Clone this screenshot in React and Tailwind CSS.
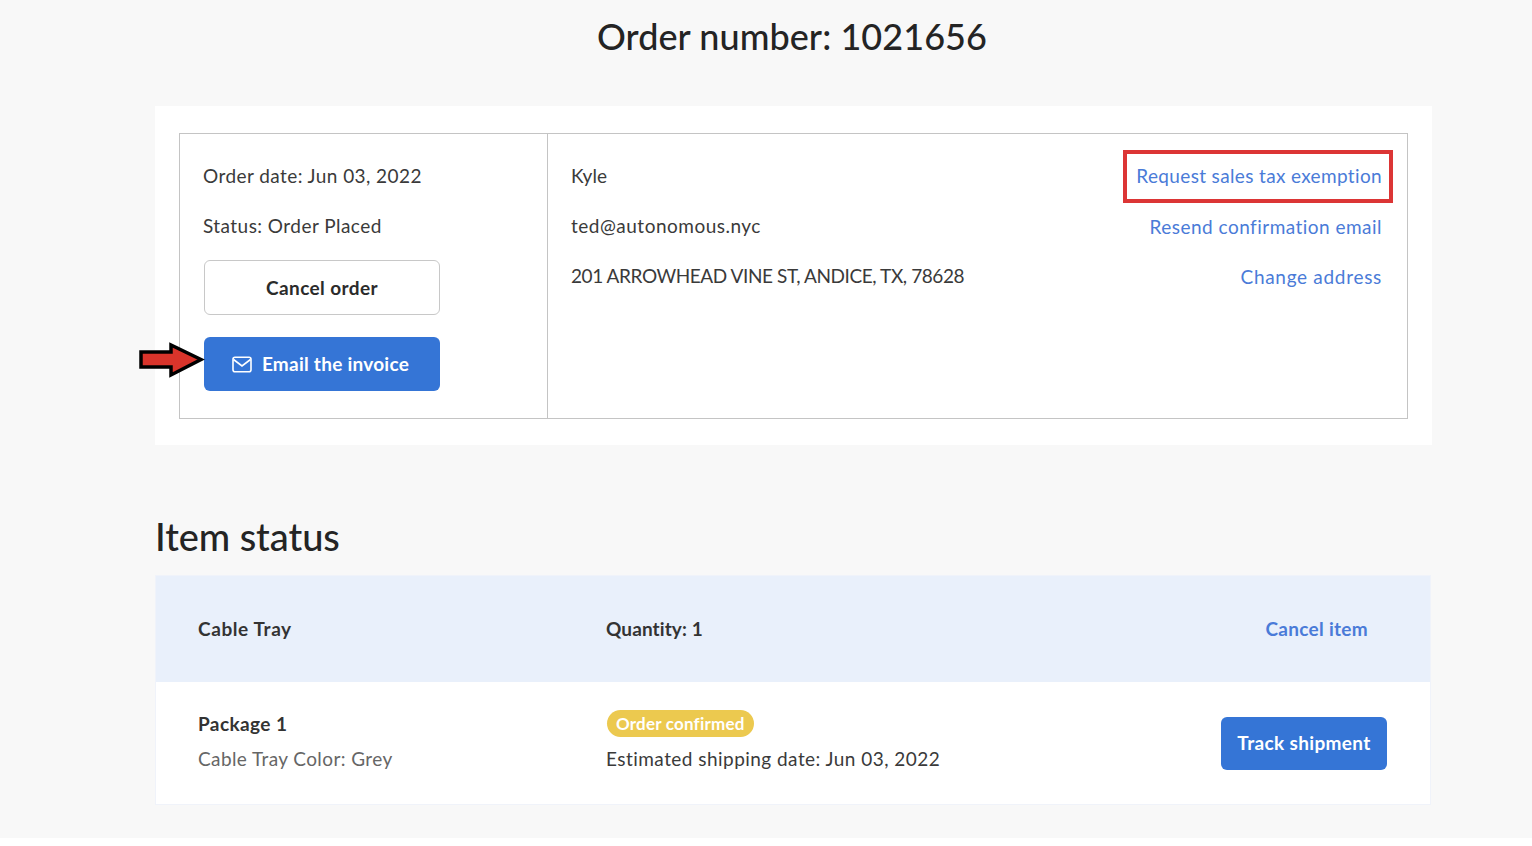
export default function App() {
  const font = { fontFamily: '"Lato", "Noto Sans", sans-serif' };
  return (
    <div style={font} className="w-[1532px] h-[846px] bg-white overflow-hidden text-[#2b2b2b]">
      <div className="h-[838px] bg-[#f8f8f8] pl-[155px] pr-[100px]">
        <div className="h-[106px] w-[1277px] pt-[14px] text-center">
          <h1 className="text-[36px] leading-[44px] font-medium text-[#242424] pr-[3px] tracking-[0.06px]">Order number: 1021656</h1>
        </div>

        <div className="w-[1277px] h-[339px] bg-white pt-[27px] pl-[24px]">
          <div className="w-[1229px] h-[286px] border border-[#c4c4c4] flex text-[19px] leading-[24px] text-[#3a3a3a]">
            <div className="w-[368px] shrink-0 border-r border-[#c4c4c4] pl-[23px] pt-[30px] flex flex-col items-start">
              <p className="tracking-[0.43px]">Order date: Jun 03, 2022</p>
              <p className="mt-[26px] tracking-[0.45px]">Status: Order Placed</p>
              <button className="mt-[22px] ml-[1px] w-[236px] h-[55px] rounded-[6px] border border-[#c8c8c8] bg-white text-[19px] font-bold text-[#2b2b2b] tracking-[0.4px]">Cancel order</button>
              <div className="relative mt-[22px] ml-[1px]">
                <button className="w-[236px] h-[54px] rounded-[6px] bg-[#3575d6] text-white text-[19px] font-bold flex items-center justify-center gap-[10px] pr-[3px] tracking-[0.25px]">
                  <svg width="20" height="17" viewBox="0 0 20 17" fill="none" stroke="white" strokeWidth="1.6">
                    <rect x="1" y="1.2" width="18" height="14.6" rx="2" />
                    <path d="M1.5 3.5L10 10l8.5-6.5" />
                  </svg>
                  Email the invoice
                </button>
                <svg className="absolute left-[-66px] top-[3px]" width="68" height="38" viewBox="0 0 68 38">
                  <path d="M3 12H33V5L63 19.5 33 35V27H3Z" fill="#d9342b" stroke="#000" strokeWidth="3.5" strokeLinejoin="miter" />
                </svg>
              </div>
            </div>

            <div className="flex-1 flex justify-between pl-[23px] pr-[25px] pt-[30px]">
              <div className="flex flex-col gap-[26px]">
                <p>Kyle</p>
                <p className="tracking-[0.5px]">ted@autonomous.nyc</p>
                <p className="tracking-[-0.42px]">201 ARROWHEAD VINE ST, ANDICE, TX, 78628</p>
              </div>
              <div className="flex flex-col items-end text-[#4a7bd8]">
                <div className="relative">
                  <p className="tracking-[0.35px]">Request sales tax exemption</p>
                  <div className="absolute left-[-13px] right-[-11px] top-[-14px] bottom-[-15px] border-[4px] border-[#dc3535]"></div>
                </div>
                <p className="mt-[27px] tracking-[0.47px]">Resend confirmation email</p>
                <p className="mt-[26px] tracking-[0.7px]">Change address</p>
              </div>
            </div>
          </div>
        </div>

        <h2 className="mt-[68px] h-[62px] text-[38px] leading-[46px] font-medium text-[#242424] tracking-[-0.07px]">Item status</h2>

        <div className="w-[1276px] h-[230px] border border-[#f0f3fa] bg-white">
          <div className="h-[106px] bg-[#e9f0fb] flex items-center pl-[42px] pr-[62px] text-[19px] font-bold text-[#333333]">
            <div className="w-[408px] tracking-[0.6px]">Cable Tray</div>
            <div className="flex-1 tracking-[0.1px]">Quantity: 1</div>
            <div className="text-[#4a7bd8] tracking-[0.3px]">Cancel item</div>
          </div>
          <div className="h-[122px] flex items-center pl-[42px] pr-[43px] text-[19px] leading-[24px]">
            <div className="w-[408px] flex flex-col gap-[11px] pb-[4px]">
              <p className="font-bold text-[#333333] tracking-[0.4px]">Package 1</p>
              <p className="text-[#666666] tracking-[0.4px]">Cable Tray Color: Grey</p>
            </div>
            <div className="flex-1 flex flex-col items-start gap-[10px] pb-[6px]">
              <span className="h-[27px] ml-[1px] px-[9px] rounded-full bg-[#ecc94f] text-white text-[17px] font-bold leading-[27px] tracking-[0.2px]">Order confirmed</span>
              <p className="text-[#3a3a3a] tracking-[0.46px]">Estimated shipping date: Jun 03, 2022</p>
            </div>
            <button className="w-[166px] h-[53px] rounded-[6px] bg-[#3575d6] text-white text-[19px] font-bold tracking-[0.35px]">Track shipment</button>
          </div>
        </div>
      </div>
    </div>
  );
}
